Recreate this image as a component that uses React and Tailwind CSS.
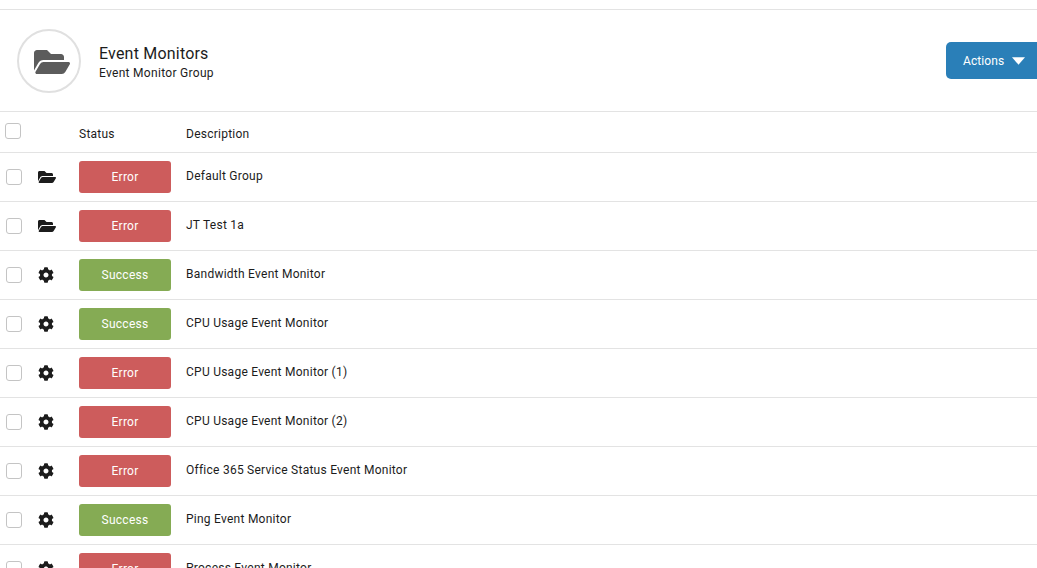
import React from "react";
import { FaFolderOpen, FaCog } from "react-icons/fa";

const rows = [
  ["folder", "Error", "Default Group"],
  ["folder", "Error", "JT Test 1a"],
  ["gear", "Success", "Bandwidth Event Monitor"],
  ["gear", "Success", "CPU Usage Event Monitor"],
  ["gear", "Error", "CPU Usage Event Monitor (1)"],
  ["gear", "Error", "CPU Usage Event Monitor (2)"],
  ["gear", "Error", "Office 365 Service Status Event Monitor"],
  ["gear", "Success", "Ping Event Monitor"],
  ["gear", "Error", "Process Event Monitor"],
];

function Check() {
  return <span className="block h-4 w-4 rounded-[3px] border border-[#c4c4c4] bg-white" />;
}

export default function App() {
  return (
    <div className="h-[568px] w-[1037px] overflow-hidden bg-white font-['Roboto','Liberation_Sans',sans-serif] text-[#1c1c1c]">
      <div className="h-[9px]" />
      <header className="flex h-[103px] items-center justify-between border-y border-[#e3e3e3] pl-[17px]">
        <div className="flex items-center">
          <div className="flex h-16 w-16 items-center justify-center rounded-full border-2 border-[#e0e0e0]">
            <FaFolderOpen className="ml-[6px] mt-[2px] h-9 w-9 text-[#5c5c5c]" />
          </div>
          <div className="ml-[18px] mt-[5px]">
            <div className="text-base leading-[20px] tracking-[0.2px]">Event Monitors</div>
            <div className="mt-[1px] text-xs leading-[17px] tracking-[0.3px]">Event Monitor Group</div>
          </div>
        </div>
        <button className="flex h-[37px] w-[91px] items-center rounded-l-[5px] bg-[#2a7fb8] pl-[17px] text-xs font-[450] tracking-[0.1px] text-white">
          Actions
          <svg viewBox="0 0 14 8" className="ml-[8px] h-2 w-[13px]"><path d="M0 0h14L7 8z" fill="#fff" /></svg>
        </button>
      </header>
      <div className="flex h-[41px] items-center border-b border-[#e3e3e3] text-xs tracking-[0.25px]">
        <div className="-mt-[2px] w-[79px] pl-[5px]"><Check /></div>
        <div className="mt-[3px] w-[107px]">Status</div>
        <div className="mt-[3px]">Description</div>
      </div>
      {rows.map(([icon, status, desc]) => (
        <div key={desc} className="flex h-[49px] shrink-0 items-center border-b border-[#e3e3e3] text-xs tracking-[0.25px]">
          <div className="w-[38px] pl-[6px]"><Check /></div>
          <div className="flex w-[41px] justify-start">
            {icon === "folder" ? (
              <FaFolderOpen className="h-[18px] w-[18px] text-[#1c1c1c]" />
            ) : (
              <FaCog className="h-4 w-4 text-[#1c1c1c]" />
            )}
          </div>
          <div
            className={`flex h-8 w-[92px] items-center justify-center rounded-[3px] font-[450] text-white ${
              status === "Error" ? "bg-[#cd5c5c]" : "bg-[#85ab54]"
            }`}
          >
            {status}
          </div>
          <div className="-mt-[3px] ml-[15px]">{desc}</div>
        </div>
      ))}
    </div>
  );
}
